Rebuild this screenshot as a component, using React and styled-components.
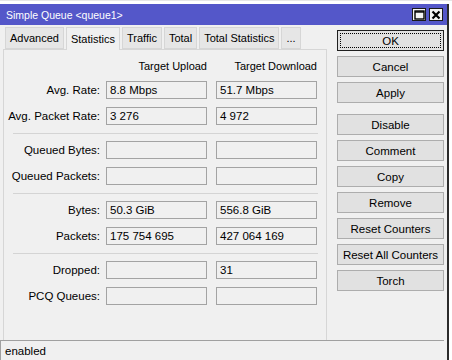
import React from "react";
import styled, { createGlobalStyle } from "styled-components";

const GlobalStyle = createGlobalStyle`
  html, body {
    margin: 0;
    padding: 0;
    background: #ffffff;
    overflow: hidden;
  }
  body {
    font-family: "Liberation Sans", Arial, sans-serif;
    font-size: 11.5px;
    color: #000000;
  }
`;

const tabs = ["Advanced", "Statistics", "Traffic", "Total", "Total Statistics", "..."];

const sections = [
  [
    { label: "Avg. Rate:", up: "8.8 Mbps", down: "51.7 Mbps" },
    { label: "Avg. Packet Rate:", up: "3 276", down: "4 972" },
  ],
  [
    { label: "Queued Bytes:", up: "", down: "" },
    { label: "Queued Packets:", up: "", down: "" },
  ],
  [
    { label: "Bytes:", up: "50.3 GiB", down: "556.8 GiB" },
    { label: "Packets:", up: "175 754 695", down: "427 064 169" },
  ],
  [
    { label: "Dropped:", up: "", down: "31" },
    { label: "PCQ Queues:", up: "", down: "" },
  ],
];

const buttonGroups = [
  ["OK", "Cancel", "Apply"],
  ["Disable", "Comment", "Copy", "Remove", "Reset Counters", "Reset All Counters", "Torch"],
];

function App() {
  return (
    <Screen>
      <GlobalStyle />
      <Window>
        <TitleBar>
          <Title>Simple Queue &lt;queue1&gt;</Title>
          <TitleButtons>
            <TitleButton>
              <svg width="11" height="10" viewBox="0 0 11 10">
                <rect x="1" y="1" width="9" height="8" fill="none" stroke="#000" strokeWidth="1.4" />
                <line x1="1" y1="2" x2="10" y2="2" stroke="#000" strokeWidth="1.4" />
              </svg>
            </TitleButton>
            <TitleButton>
              <svg width="10" height="10" viewBox="0 0 10 10">
                <path d="M1.5 1.5 L8.5 8.5 M8.5 1.5 L1.5 8.5" stroke="#000" strokeWidth="2.2" />
              </svg>
            </TitleButton>
          </TitleButtons>
        </TitleBar>

        <Body>
          <LeftSide>
            <TabStrip>
              {tabs.map((tab) => (
                <Tab key={tab} $active={tab === "Statistics"}>
                  {tab}
                </Tab>
              ))}
            </TabStrip>
            <Panel>
              <HeaderRow>
                <span />
                <ColumnTitle>Target Upload</ColumnTitle>
                <ColumnTitle>Target Download</ColumnTitle>
              </HeaderRow>
              {sections.map((rows, i) => (
                <React.Fragment key={i}>
                  {i > 0 && <Separator />}
                  <Section>
                    {rows.map((row) => (
                      <FieldRow key={row.label}>
                        <FieldLabel>{row.label}</FieldLabel>
                        <Field>{row.up}</Field>
                        <Field>{row.down}</Field>
                      </FieldRow>
                    ))}
                  </Section>
                </React.Fragment>
              ))}
            </Panel>
          </LeftSide>

          <ButtonColumn>
            {buttonGroups.map((group, i) => (
              <ButtonGroup key={i}>
                {group.map((name) => (
                  <ActionButton key={name} $default={name === "OK"}>
                    {name === "OK" ? <FocusRing>{name}</FocusRing> : name}
                  </ActionButton>
                ))}
              </ButtonGroup>
            ))}
          </ButtonColumn>
        </Body>

        <StatusBar>enabled</StatusBar>
      </Window>
    </Screen>
  );
}

const Screen = styled.div`
  display: flex;
  width: 452px;
  height: 360px;
  padding-top: 3px;
  box-sizing: border-box;
  background: #ffffff;
  border-top: 1px solid #e6e6e6;
`;

const Window = styled.div`
  display: flex;
  flex-direction: column;
  width: 449px;
  height: 357px;
  background: #f0f0f0;
  border-right: 2px solid #2b2b2b;
  box-sizing: border-box;
`;

const TitleBar = styled.div`
  display: flex;
  align-items: center;
  justify-content: space-between;
  height: 21px;
  padding: 0 4px 0 6px;
  background: #5457c9;
`;

const Title = styled.span`
  font-size: 10.5px;
  color: #ffffff;
`;

const TitleButtons = styled.div`
  display: flex;
  gap: 3px;
`;

const TitleButton = styled.div`
  display: flex;
  align-items: center;
  justify-content: center;
  width: 12px;
  height: 11px;
  background: #f4f4f4;
  border: 1px solid #1a1a1a;
`;

const Body = styled.div`
  display: flex;
  flex: 1;
  min-height: 0;
  padding: 0 0 0 3px;
`;

const LeftSide = styled.div`
  display: flex;
  flex-direction: column;
  width: 324px;
`;

const TabStrip = styled.div`
  display: flex;
  align-items: flex-end;
  height: 23px;
  padding-left: 1px;
  margin-top: 1px;
  font-size: 11px;
`;

const Tab = styled.div`
  display: flex;
  align-items: center;
  height: ${({ $active }) => ($active ? "22px" : "20px")};
  padding: 0 4px;
  margin: 0 1px ${({ $active }) => ($active ? "-1px" : "0")};
  background: ${({ $active }) => ($active ? "#f0f0f0" : "#e6e6e6")};
  border: 1px solid #d6d6d6;
  border-bottom: ${({ $active }) => ($active ? "none" : "1px solid #d6d6d6")};
  position: relative;
  z-index: ${({ $active }) => ($active ? 1 : 0)};
  white-space: nowrap;
`;

const Panel = styled.div`
  flex: 1;
  padding: 7px 8px 0 0;
  border: 1px solid #d6d6d6;
  border-bottom: none;
`;

const gridColumns = `
  display: grid;
  grid-template-columns: 93px 101px 101px;
  column-gap: 9px;
  align-items: center;
`;

const HeaderRow = styled.div`
  ${gridColumns}
  height: 18px;
  margin-bottom: 6px;
`;

const ColumnTitle = styled.span`
  text-align: right;
  font-size: 11px;
`;

const Section = styled.div`
  display: flex;
  flex-direction: column;
  gap: 8px;
`;

const FieldRow = styled.div`
  ${gridColumns}
`;

const FieldLabel = styled.span`
  margin-right: -3px;
  text-align: right;
  white-space: nowrap;
`;

const Field = styled.div`
  display: flex;
  align-items: center;
  height: 18px;
  padding-left: 3px;
  box-sizing: border-box;
  border: 1px solid #a3a3a3;
  background: #f0f0f0;
  white-space: nowrap;
`;

const Separator = styled.div`
  height: 1px;
  margin: 8px 0 7px 9px;
  background: #d4d4d4;
`;

const ButtonColumn = styled.div`
  display: flex;
  flex-direction: column;
  gap: 11px;
  width: 107px;
  margin-left: 10px;
  padding-top: 5px;
`;

const ButtonGroup = styled.div`
  display: flex;
  flex-direction: column;
  gap: 5px;
`;

const ActionButton = styled.div`
  display: flex;
  align-items: center;
  justify-content: center;
  height: 21px;
  box-sizing: border-box;
  padding: ${({ $default }) => ($default ? "2px" : "0")};
  background: #e1e1e1;
  border: 1px solid ${({ $default }) => ($default ? "#1f1f1f" : "#adadad")};
  white-space: nowrap;
`;

const FocusRing = styled.span`
  display: flex;
  align-items: center;
  justify-content: center;
  width: 100%;
  height: 100%;
  box-sizing: border-box;
  border: 1px dotted #000000;
`;

const StatusBar = styled.div`
  display: flex;
  align-items: center;
  height: 20px;
  padding-left: 4px;
  margin-right: 3px;
  border-top: 1px solid #a0a0a0;
  border-left: 1px solid #a0a0a0;
`;

export default App;
